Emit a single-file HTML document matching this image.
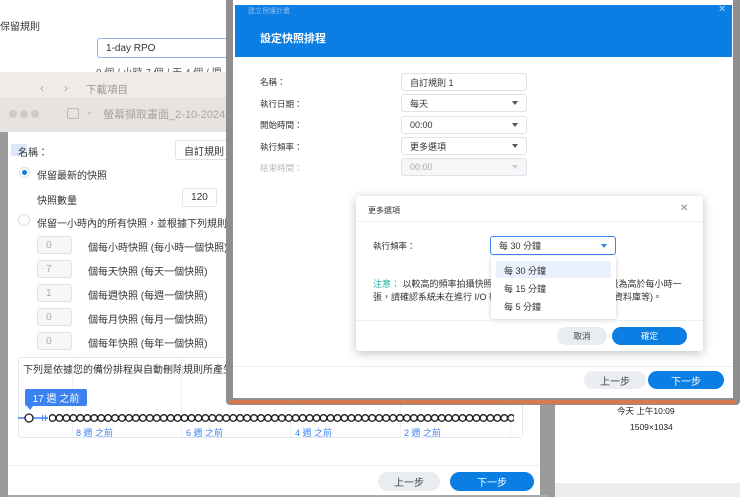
<!DOCTYPE html>
<html><head><meta charset="utf-8"><style>
*{margin:0;padding:0;box-sizing:border-box}
body{width:740px;height:497px;overflow:hidden;background:#fff;position:relative;font-family:"Liberation Sans","Noto Sans CJK TC",sans-serif;font-size:10px;color:#333}
.a{position:absolute}
.inp{position:absolute;border:1px solid #dfe3e8;border-radius:3px;background:#fff;font-size:10px;padding-left:8px;display:flex;align-items:center;color:#333}
.dis{background:#f4f6f8;color:#aaa}
.caret{position:absolute;right:8px;top:50%;margin-top:-2px;border-left:3px solid transparent;border-right:3px solid transparent;border-top:4px solid #555}
.btn{position:absolute;border-radius:10px;display:flex;align-items:center;justify-content:center;font-size:10px}
.g{background:#e9edf1;color:#444}
.b{background:#0a7ee3;color:#fff}
</style></head><body>
<!-- background top -->
<div class="a" style="left:0;top:18px;font-size:10px">保留規則</div>
<div class="inp" style="left:97px;top:38px;width:140px;height:20px;border-color:#8bb8e8">1-day RPO</div>
<div class="a" style="left:96px;top:64px;font-size:10px;color:#555">0 個 / 小時 7 個 / 天 4 個 / 週</div>
<!-- finder bars -->
<div class="a" style="left:0;top:72px;width:230px;height:25px;background:#eeebe8"></div>
<div class="a" style="left:40px;top:81px;color:#aaa;font-size:12px">&lsaquo;&nbsp;&nbsp;&nbsp;&nbsp;&nbsp;&nbsp;&rsaquo;</div>
<div class="a" style="left:86px;top:82px;color:#999;font-size:10.5px">下載項目</div>
<div class="a" style="left:0;top:97px;width:230px;height:35px;background:#e7e3e0"></div>
<div class="a" style="left:9px;top:110px;width:8px;height:8px;border-radius:50%;background:#cfcbc8;box-shadow:11px 0 #cfcbc8,22px 0 #cfcbc8"></div>
<div class="a" style="left:67px;top:108px;width:12px;height:11px;border:1px solid #bbb;border-radius:2px"></div>
<div class="a" style="left:86px;top:107px;color:#aaa;font-size:8px">⌄</div>
<div class="a" style="left:103px;top:106px;color:#a8a4a0;font-size:11px">螢幕擷取畫面_2-10-2024</div>
<!-- left window -->
<div class="a" style="left:0;top:132px;width:8px;height:365px;background:#9b9b9b"></div>
<div class="a" style="left:540px;top:405px;width:15px;height:92px;background:#9b9b9b"></div>
<div class="a" style="left:8px;top:132px;width:222px;height:365px;background:#fff"></div>
<div class="a" style="left:8px;top:405px;width:532px;height:90px;background:#fff"></div>
<div class="a" style="left:8px;top:495px;width:540px;height:2px;background:#aaa"></div>
<div class="a" style="left:11px;top:144px;width:16px;height:12px;background:#dde9fb"></div>
<div class="a" style="left:18px;top:144px">名稱：</div>
<div class="inp" style="left:175px;top:140px;width:60px;height:20px">自訂規則</div>
<div class="a" style="left:19px;top:167px;width:11px;height:11px;border-radius:50%;border:1px solid #ddd;background:#fff"></div>
<div class="a" style="left:22px;top:170px;width:5px;height:5px;border-radius:50%;background:#0a7ee3"></div>
<div class="a" style="left:37px;top:167px">保留最新的快照</div>
<div class="a" style="left:37px;top:192px">快照數量</div>
<div class="inp" style="left:182px;top:188px;width:35px;height:19px;justify-content:center;padding:0">120</div>
<div class="a" style="left:18px;top:214px;width:12px;height:12px;border-radius:50%;border:1px solid #ddd"></div>
<div class="a" style="left:37px;top:215px">保留一小時內的所有快照，並根據下列規則保留</div>
<div class="inp dis" style="left:37px;top:236px;width:35px;height:18px">0</div>
<div class="a" style="left:88px;top:239px">個每小時快照 (每小時一個快照)</div>
<div class="inp dis" style="left:37px;top:260px;width:35px;height:18px">7</div>
<div class="a" style="left:88px;top:263px">個每天快照 (每天一個快照)</div>
<div class="inp dis" style="left:37px;top:284px;width:35px;height:18px">1</div>
<div class="a" style="left:88px;top:287px">個每週快照 (每週一個快照)</div>
<div class="inp dis" style="left:37px;top:308px;width:35px;height:18px">0</div>
<div class="a" style="left:88px;top:311px">個每月快照 (每月一個快照)</div>
<div class="inp dis" style="left:37px;top:332px;width:35px;height:18px">0</div>
<div class="a" style="left:88px;top:335px">個每年快照 (每年一個快照)</div>
<!-- timeline -->
<div class="a" style="left:18px;top:357px;width:505px;height:81px;border:1px solid #e3e8ee;border-radius:3px"></div>
<div class="a" style="left:23px;top:361px">下列是依據您的備份排程與自動刪除規則所產生出來</div>
<div class="a" style="left:72px;top:358px;width:1px;height:79px;background:#eef1f5"></div>
<div class="a" style="left:181px;top:358px;width:1px;height:79px;background:#eef1f5"></div>
<div class="a" style="left:290px;top:358px;width:1px;height:79px;background:#eef1f5"></div>
<div class="a" style="left:400px;top:358px;width:1px;height:79px;background:#eef1f5"></div>
<div class="a" style="left:510px;top:358px;width:1px;height:79px;background:#eef1f5"></div>
<div class="a" style="left:25px;top:389px;width:62px;height:17px;background:#3b82f0;border-radius:2px;color:#fff;font-size:10px;display:flex;align-items:center;justify-content:center">17 週 之前</div>
<div class="a" style="left:27px;top:406px;border-left:3px solid transparent;border-right:3px solid transparent;border-top:4px solid #3b82f0"></div>
<svg class="a" style="left:18px;top:411px" width="500" height="14">
<defs><pattern id="c" x="31" y="0" width="6.95" height="14" patternUnits="userSpaceOnUse"><circle cx="3.5" cy="7" r="3.3" fill="#fff" stroke="#1a1a1a" stroke-width="1.3"/></pattern></defs>
<line x1="0" y1="7" x2="30" y2="7" stroke="#3b82f0" stroke-width="1.4"/>
<circle cx="11" cy="7" r="4" fill="#fff" stroke="#1a1a1a" stroke-width="1.3"/>
<path d="M24 4 q2 3 0 6 M27 4 q2 3 0 6" stroke="#3b82f0" fill="none" stroke-width="1"/>
<rect x="31" y="0" width="465" height="14" fill="url(#c)"/>
</svg>
<div class="a" style="left:76px;top:426px;color:#3b82f0;font-size:9px">8 週 之前</div>
<div class="a" style="left:186px;top:426px;color:#3b82f0;font-size:9px">6 週 之前</div>
<div class="a" style="left:295px;top:426px;color:#3b82f0;font-size:9px">4 週 之前</div>
<div class="a" style="left:404px;top:426px;color:#3b82f0;font-size:9px">2 週 之前</div>
<div class="a" style="left:8px;top:465px;width:532px;height:1px;background:#eee"></div>
<div class="btn g" style="left:378px;top:472px;width:62px;height:19px">上一步</div>
<div class="btn b" style="left:450px;top:472px;width:84px;height:19px">下一步</div>
<!-- right under-area -->
<div class="a" style="left:555px;top:405px;width:185px;height:78px;background:#fff"></div>
<div class="a" style="left:555px;top:483px;width:185px;height:14px;background:#ececec"></div>
<div class="a" style="left:617px;top:405px;font-size:8.5px;color:#222">今天 上午10:09</div>
<div class="a" style="left:630px;top:422px;font-size:8.5px;color:#222">1509×1034</div>
<!-- main dialog -->
<div class="a" style="left:226px;top:0;width:514px;height:405px;background:#8e8e8e;border-radius:0 0 4px 4px"></div>
<div class="a" style="left:230px;top:400px;width:506px;height:4px;background:#d87a50"></div>
<div class="a" style="left:233px;top:0;width:500px;height:398px;background:#fff"></div>
<div class="a" style="left:235px;top:5px;width:497px;height:52px;background:#0a7ee3"></div>
<div class="a" style="left:248px;top:6px;font-size:7px;color:#8bbdf2">建立保護計畫</div>
<div class="a" style="left:718px;top:4px;color:#a9d0f7;font-size:10px">✕</div>
<div class="a" style="left:260px;top:30px;color:#fff;font-size:11px;font-weight:bold">設定快照排程</div>
<div class="a" style="left:260px;top:76px;font-size:8.5px">名稱：</div>
<div class="a" style="left:260px;top:98px;font-size:8.5px">執行日期：</div>
<div class="a" style="left:260px;top:119px;font-size:8.5px">開始時間：</div>
<div class="a" style="left:260px;top:141px;font-size:8.5px">執行頻率：</div>
<div class="a" style="left:260px;top:162px;font-size:8.5px;color:#bbb">結束時間：</div>
<div class="inp" style="left:401px;top:73px;width:126px;height:18px;font-size:9px">自訂規則 1</div>
<div class="inp" style="left:401px;top:94px;width:126px;height:18px;font-size:9px">每天<span class="caret"></span></div>
<div class="inp" style="left:401px;top:116px;width:126px;height:18px;font-size:9px">00:00<span class="caret"></span></div>
<div class="inp" style="left:401px;top:137px;width:126px;height:18px;font-size:9px">更多選項<span class="caret"></span></div>
<div class="inp dis" style="left:401px;top:158px;width:126px;height:18px;font-size:9px">00:00<span class="caret" style="border-top-color:#ccc"></span></div>
<div class="a" style="left:233px;top:366px;width:500px;height:1px;background:#eee"></div>
<div class="btn g" style="left:584px;top:371px;width:62px;height:18px">上一步</div>
<div class="btn b" style="left:648px;top:371px;width:76px;height:18px">下一步</div>
<!-- small dialog -->
<div class="a" style="left:356px;top:196px;width:347px;height:155px;background:#fff;border-radius:3px;box-shadow:0 2px 10px rgba(0,0,0,.25)"></div>
<div class="a" style="left:368px;top:205px;font-size:8px">更多選項</div>
<div class="a" style="left:680px;top:203px;font-size:10px;color:#888">✕</div>
<div class="a" style="left:356px;top:221px;width:347px;height:1px;background:#eee"></div>
<div class="a" style="left:373px;top:240px;font-size:8.5px">執行頻率：</div>
<div class="inp" style="left:490px;top:236px;width:126px;height:19px;border-color:#3b82f0;font-size:9px">每 30 分鐘<span class="caret" style="border-top-color:#3b82f0"></span></div>
<div class="a" style="left:373px;top:278px;font-size:9px;line-height:13px;width:316px"><span style="color:#1ab0a0">注意：</span> 以較高的頻率拍攝快照可能會影響系統效能，若頻率設為高於每小時一張，請確認系統未在進行 I/O 密集的工作 (例如： 備份任務、資料庫等)。</div>
<div class="a" style="left:491px;top:256px;width:125px;height:63px;background:#fff;border-radius:3px;box-shadow:0 1px 5px rgba(0,0,0,.2)"></div>
<div class="a" style="left:496px;top:261px;width:115px;height:17px;background:#e9f1fc;border-radius:2px"></div>
<div class="a" style="left:504px;top:264px;font-size:9px">每 30 分鐘</div>
<div class="a" style="left:504px;top:282px;font-size:9px">每 15 分鐘</div>
<div class="a" style="left:504px;top:300px;font-size:9px">每 5 分鐘</div>
<div class="a" style="left:356px;top:320px;width:347px;height:1px;background:#eee"></div>
<div class="btn g" style="left:557px;top:327px;width:50px;height:18px;font-size:8.5px">取消</div>
<div class="btn b" style="left:612px;top:327px;width:75px;height:18px;font-size:8.5px">確定</div>
</body></html>
